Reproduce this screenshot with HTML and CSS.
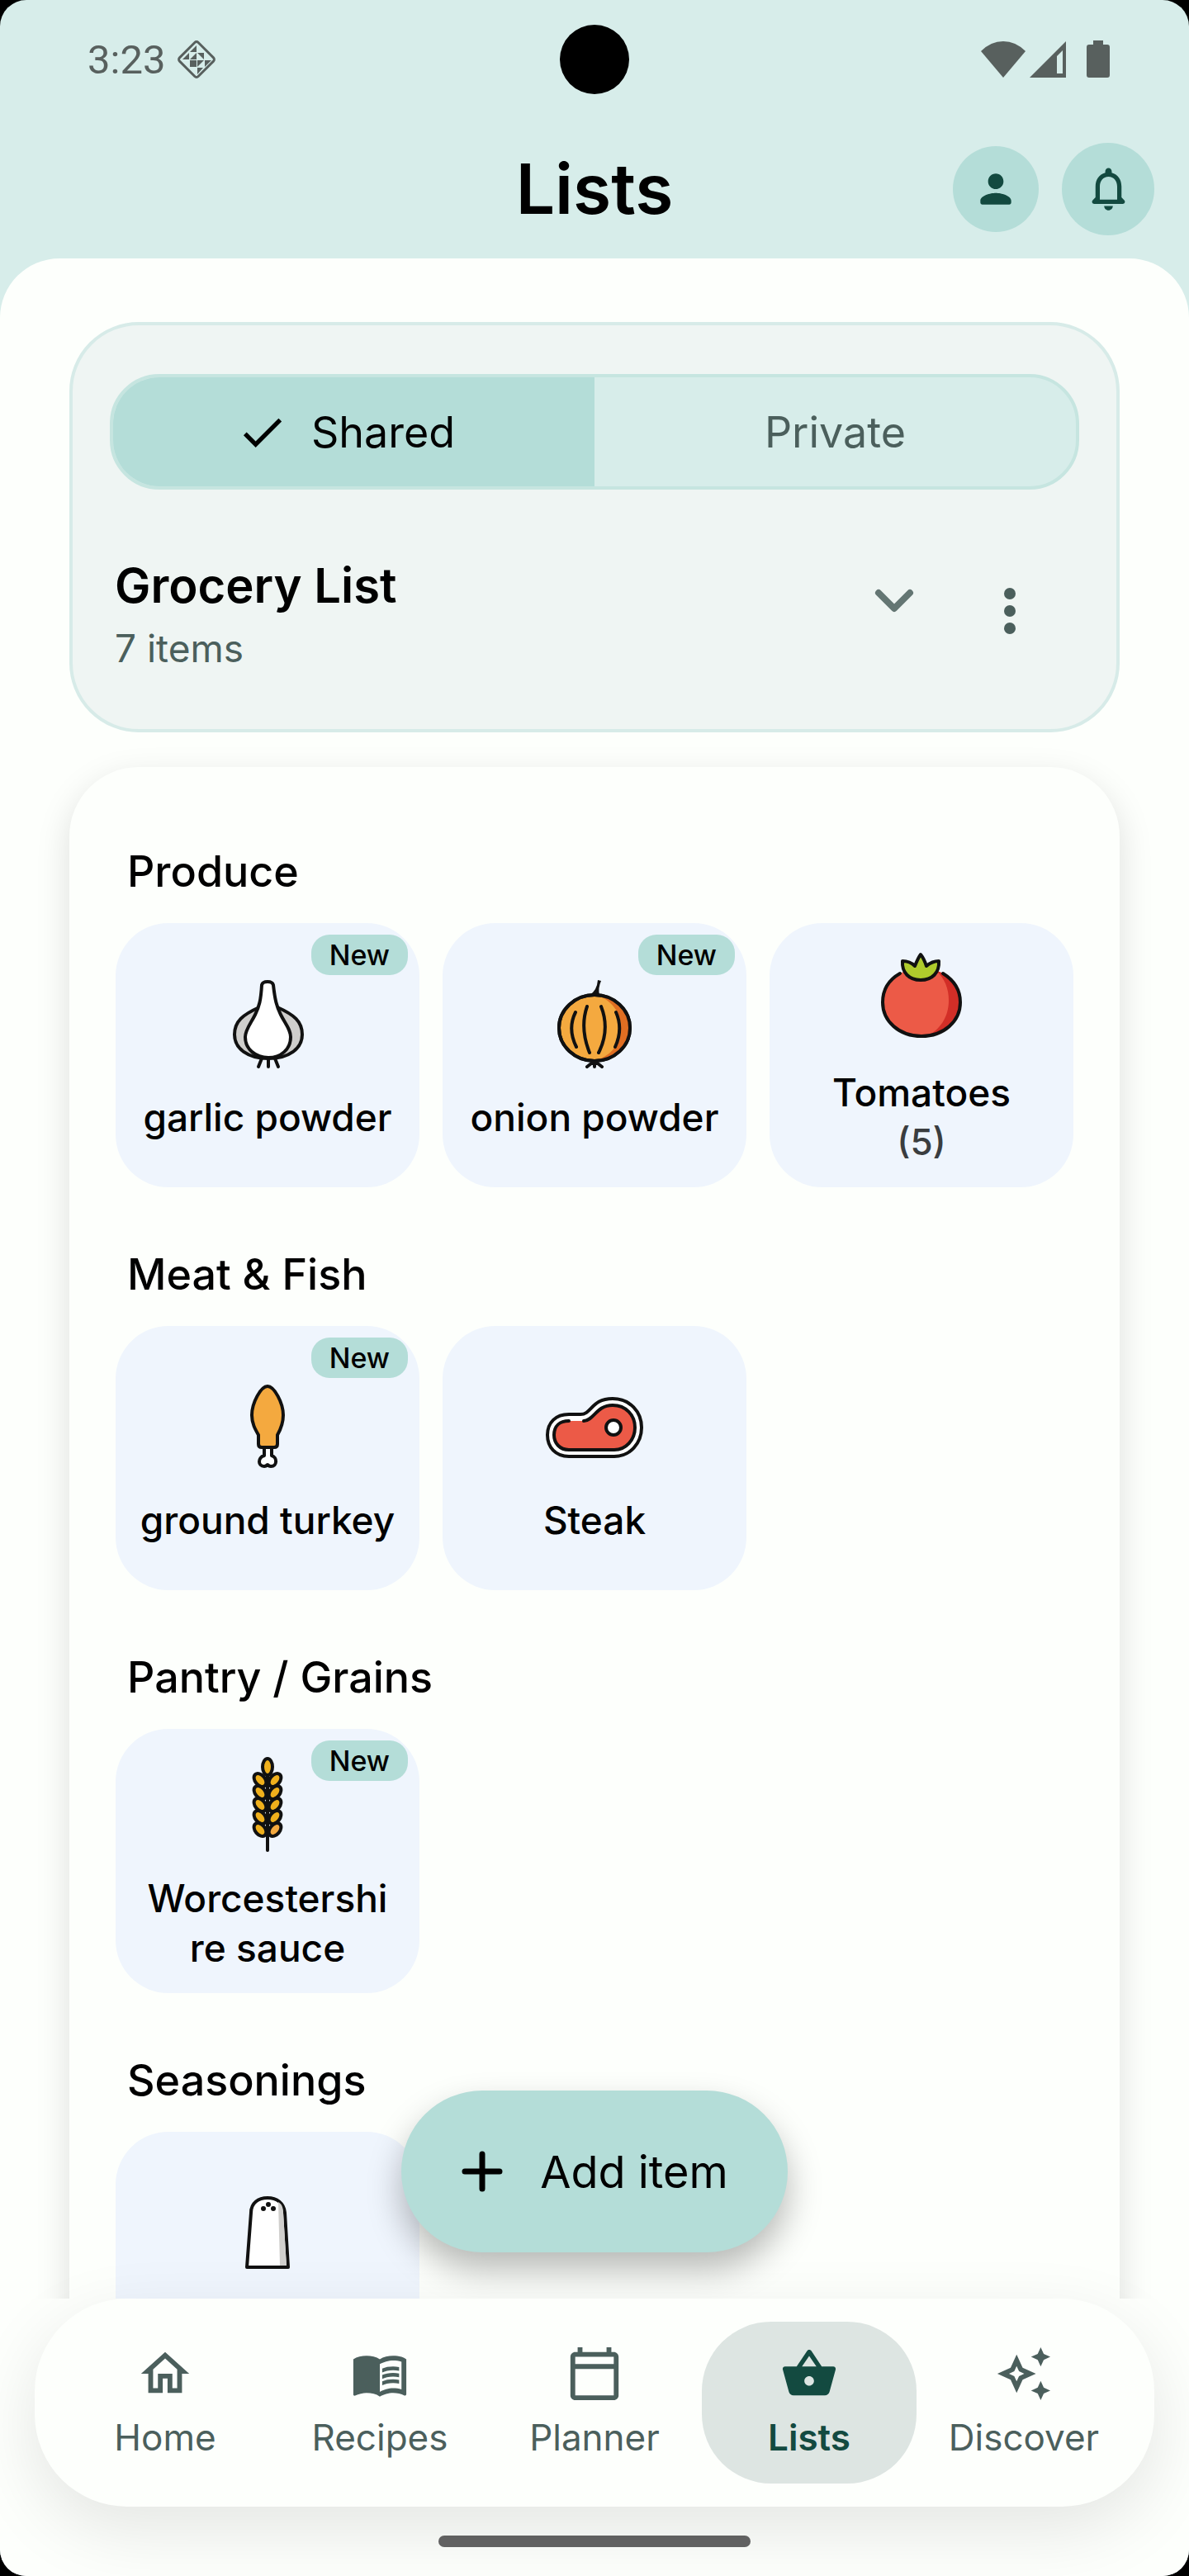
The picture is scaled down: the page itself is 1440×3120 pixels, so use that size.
FILE: index.html
```html
<!DOCTYPE html>
<html lang="en">
<head>
  <meta charset="UTF-8">
  <title>Lists</title>
  <meta name="viewport" content="width=device-width, initial-scale=1.0">
  <link rel="stylesheet" href="styles.css">
</head>
<body>
<div class="app">
  <div class="status-bar">
    <div class="status-left">
      <span class="clock">3:23</span>
      <svg class="status-diamond" viewBox="0 0 52 52">
        <rect x="10" y="10" width="32" height="32" rx="3" transform="rotate(45 26 26)" fill="none" stroke="currentColor" stroke-width="3"/>
        <path fill="currentColor" d="M26 9v8h-8zM17 18v8H9zM26 18v8h-8zM27 18h8v8zM26 27v8l-8-8zM18 27v8h8zM27 27h8l-8 8zM36 27h8l-8 8zM27 36h7l-7 8z"/>
      </svg>
    </div>
    <span class="camera"></span>
    <div class="status-right">
      <svg width="54" height="46" viewBox="0 0 54 46"><path fill="currentColor" d="M27 45L0 13Q12 1 27 1t27 12z"/></svg>
      <svg width="46" height="46" viewBox="0 0 46 46"><path fill="currentColor" fill-rule="evenodd" d="M45 1v44H1zM41 12l-7 7v21h7z"/></svg>
      <svg class="battery" width="28" height="46" viewBox="0 0 28 46"><path fill="currentColor" d="M8 0h12v5h5q3 0 3 3v34q0 3-3 3H3q-3 0-3-3V8q0-3 3-3h5z"/></svg>
    </div>
  </div>

  <header class="top-bar">
    <h1>Lists</h1>
    <div class="top-actions">
      <button class="round-btn" aria-label="Profile">
        <svg width="56" height="56" viewBox="0 0 24 24"><path fill="currentColor" d="M12 12c2.21 0 4-1.79 4-4s-1.79-4-4-4-4 1.79-4 4 1.79 4 4 4zm0 2c-2.67 0-8 1.34-8 4v1c0 .55.45 1 1 1h14c.55 0 1-.45 1-1v-1c0-2.66-5.33-4-8-4z"/></svg>
      </button>
      <button class="round-btn large" aria-label="Notifications">
        <svg width="63" height="63" viewBox="0 0 24 24"><path fill="currentColor" d="M19.29 17.29L18 16v-5c0-3.07-1.63-5.64-4.5-6.32V4c0-.83-.67-1.5-1.5-1.5s-1.5.67-1.5 1.5v.68C7.64 5.36 6 7.92 6 11v5l-1.29 1.29c-.63.63-.19 1.71.7 1.71h13.17c.9 0 1.34-1.08.71-1.71zM16 17H8v-6c0-2.48 1.51-4.5 4-4.5s4 2.02 4 4.5v6zm-4 5c1.1 0 2-.9 2-2h-4c0 1.1.89 2 2 2z"/></svg>
      </button>
    </div>
  </header>

  <div class="sheet">
    <main>
      <section class="list-picker">
        <div class="segmented">
          <button class="segment active" aria-pressed="true">
            <svg width="63" height="63" viewBox="0 0 24 24"><path fill="currentColor" d="M9 16.17L4.83 12l-1.42 1.41L9 19 21 7l-1.41-1.41z"/></svg>
            Shared
          </button>
          <button class="segment" aria-pressed="false">Private</button>
        </div>
        <div class="list-row">
          <div class="list-info">
            <h2>Grocery List</h2>
            <p>7 items</p>
          </div>
          <button class="icon-btn chevron" aria-label="Choose list">
            <svg width="84" height="84" viewBox="0 0 84 84"><path d="M23 20l19 19 19-19" fill="none" stroke="currentColor" stroke-width="8" stroke-linecap="round" stroke-linejoin="round"/></svg>
          </button>
          <button class="icon-btn" aria-label="More options">
            <svg width="84" height="84" viewBox="0 0 84 84"><g fill="currentColor"><circle cx="42" cy="21" r="7"/><circle cx="42" cy="42" r="7"/><circle cx="42" cy="63" r="7"/></g></svg>
          </button>
        </div>
      </section>

      <div class="items">
        <section>
          <h3>Produce</h3>
          <div class="tiles">
            <button class="tile">
              <span class="badge">New</span>
              <svg class="food" viewBox="0 0 120 120">
                <path fill="#cfcecc" d="M50 41C30 50 20 58 20 74c0 17 16 29 41 29s41-12 41-29c0-16-10-24-30-33"/>
                <path fill="#fff" d="M53 14q1-4 7-4t7 4c2 18 4 26 9 36 6 12 12 18 12 27 0 15-12 25-27 25S33 92 33 77c0-9 7-17 12-27 5-10 7-18 8-36z"/>
                <path fill="none" d="M53 103l-4 10M61 103v10M69 103l4 10"/>
              </svg>
              <span class="tile-name">garlic powder</span>
            </button>
            <button class="tile">
              <span class="badge">New</span>
              <svg class="food" viewBox="0 0 120 120">
                <path class="flat" fill="#111" d="M54 26q9-5 10-18l4 1q-4 9-2 17z"/>
                <ellipse cx="60" cy="66" rx="43" ry="40" fill="#f4a93f"/>
                <path class="flat" fill="#e06e22" d="M64 27c16 5 28 20 28 38 0 20-11 34-30 40 25 0 40-18 40-39 0-20-14-37-38-39z"/>
                <ellipse cx="60" cy="66" rx="43" ry="40" fill="none"/>
                <path fill="none" d="M37 47q-10 20 1 42M51 40q-9 26 3 56M68 40q11 28-3 56M86 47q9 20-1 42M60 106l-9 7M60 106v7M60 106l9 7"/>
              </svg>
              <span class="tile-name">onion powder</span>
            </button>
            <button class="tile">
              <svg class="food" viewBox="0 0 120 120">
                <ellipse class="flat" cx="60" cy="65" rx="47" ry="42" fill="#ec5a47"/>
                <path class="flat" fill="#d22e27" d="M78 27c10 9 15 21 15 36 0 20-11 36-27 43 24 0 41-20 41-42 0-17-10-32-29-37z"/>
                <path fill="none" d="M34 30C20 38 13 50 13 65c0 23 20 41 47 41s47-18 47-41c0-15-8-27-21-35"/>
                <path fill="#afcb2c" d="M37 15q9 0 15 6 4-10 7-14 4 5 7 14 7-6 15-6c1 14-8 23-22 23S36 29 37 15z"/>
              </svg>
              <span class="tile-name">Tomatoes</span>
              <span class="tile-qty">(5)</span>
            </button>
          </div>
        </section>

        <section>
          <h3>Meat &amp; Fish</h3>
          <div class="tiles">
            <button class="tile">
              <span class="badge">New</span>
              <svg class="food" viewBox="0 0 120 120">
                <path fill="#fff" d="M56 86v10c-8 2-8 13 0 13 2 0 3-1 4-2 1 1 2 2 4 2 8 0 8-11 1-13V86z"/>
                <path fill="#f4a93f" d="M60 12c8 0 19 20 19 35 0 10-3 17-7 24v11q0 4-4 4H53q-4 0-4-4V71c-4-7-8-14-8-24 0-15 11-35 19-35z"/>
              </svg>
              <span class="tile-name">ground turkey</span>
            </button>
            <button class="tile">
              <svg class="food" viewBox="0 0 120 120">
                <path fill="#fff" d="M29 97C13 97 3 86 3 71s10-25 26-25h14c14 0 13-19 39-19 21 0 35 16 35 35S103 97 84 97z"/>
                <path class="flat" fill="#ec5a47" d="M29 89c-11 0-18-8-18-18 0-11 7-17 18-17h18c13 0 15-19 35-19 16 0 27 12 27 27S98 89 84 89z"/>
                <path fill="none" d="M29 54c-11 0-18 6-18 17 0 10 7 18 18 18h55c14 0 25-12 25-27S98 35 82 35c-20 0-22 18-35 19"/>
                <circle cx="83" cy="62" r="9" fill="#fff"/>
              </svg>
              <span class="tile-name">Steak</span>
            </button>
          </div>
        </section>

        <section>
          <h3>Pantry / Grains</h3>
          <div class="tiles">
            <button class="tile">
              <span class="badge">New</span>
              <svg class="food" viewBox="0 0 120 120">
                <path d="M60 26v90"/>
                <g fill="#f0b01c">
                  <ellipse cx="60" cy="15" rx="6" ry="10"/>
                  <ellipse cx="51" cy="31" rx="6" ry="9" transform="rotate(-40 51 31)"/>
                  <ellipse cx="69" cy="31" rx="6" ry="9" transform="rotate(40 69 31)"/>
                  <ellipse cx="51" cy="46" rx="6" ry="9" transform="rotate(-40 51 46)"/>
                  <ellipse cx="69" cy="46" rx="6" ry="9" transform="rotate(40 69 46)"/>
                  <ellipse cx="51" cy="61" rx="6" ry="9" transform="rotate(-40 51 61)"/>
                  <ellipse cx="69" cy="61" rx="6" ry="9" transform="rotate(40 69 61)"/>
                  <ellipse cx="51" cy="76" rx="6" ry="9" transform="rotate(-40 51 76)"/>
                  <ellipse cx="69" cy="76" rx="6" ry="9" transform="rotate(40 69 76)"/>
                  <ellipse cx="51" cy="91" rx="6" ry="9" transform="rotate(-40 51 91)"/>
                  <ellipse cx="69" cy="91" rx="6" ry="9" transform="rotate(40 69 91)" fill="#f4a93f"/>
                </g>
              </svg>
              <span class="tile-name">Worcestershi<wbr>re sauce</span>
            </button>
          </div>
        </section>

        <section>
          <h3>Seasonings</h3>
          <div class="tiles">
            <button class="tile">
              <svg class="food" viewBox="0 0 120 120">
                <path fill="#fff" d="M40 37c0-12 9-18 20-18s20 6 21 18l4 66H35z"/>
                <path class="flat" fill="#d0cfcd" d="M73 24c5 3 6 8 6 13l4 64h-8z"/>
                <g class="flat" fill="#111"><circle cx="55" cy="32" r="3"/><circle cx="61" cy="27" r="3"/><circle cx="67" cy="32" r="3"/></g>
              </svg>
              <span class="tile-name"></span>
            </button>
          </div>
        </section>
      </div>

      <button class="add-btn">
        <svg width="84" height="84" viewBox="0 0 84 84"><path d="M42 21v42M21 42h42" stroke="currentColor" stroke-width="7" stroke-linecap="round"/></svg>
        Add item
      </button>
    </main>

    <nav class="bottom-nav">
      <a href="#home" class="nav-item">
        <svg viewBox="0 0 24 24"><path d="M12 5.69l5 4.5V18h-2v-6H9v6H7v-7.81l5-4.5M12 3L2 12h3v8h6v-6h2v6h6v-8h3L12 3z"/></svg>
        Home
      </a>
      <a href="#recipes" class="nav-item">
        <svg viewBox="0 0 24 24"><path d="M21 5c-1.11-.35-2.33-.5-3.5-.5-1.95 0-4.05.4-5.5 1.5-1.45-1.1-3.55-1.5-5.5-1.5S2.45 4.9 1 6v14.65c0 .25.25.5.5.5.1 0 .15-.05.25-.05C3.1 20.45 5.05 20 6.5 20c1.95 0 4.05.4 5.5 1.5 1.35-.85 3.8-1.5 5.5-1.5 1.65 0 3.35.3 4.75 1.05.1.05.15.05.25.05.25 0 .5-.25.5-.5V6c-.6-.45-1.25-.75-2-1zm0 13.5c-1.1-.35-2.3-.5-3.5-.5-1.7 0-4.15.65-5.5 1.5V8c1.35-.85 3.8-1.5 5.5-1.5 1.2 0 2.4.15 3.5.5v11.5z"/><path d="M17.5 10.5c.88 0 1.73.09 2.5.26V9.24c-.79-.15-1.64-.24-2.5-.24-1.7 0-3.24.29-4.5.83v1.66c1.13-.64 2.7-.99 4.5-.99zM13 12.49v1.66c1.13-.64 2.7-.99 4.5-.99.88 0 1.73.09 2.5.26V11.9c-.79-.15-1.64-.24-2.5-.24-1.7 0-3.24.3-4.5.83zM17.5 14.33c-1.7 0-3.24.29-4.5.83v1.66c1.13-.64 2.7-.99 4.5-.99.88 0 1.73.09 2.5.26v-1.52c-.79-.16-1.64-.24-2.5-.24z"/></svg>
        Recipes
      </a>
      <a href="#planner" class="nav-item">
        <svg viewBox="0 0 24 24"><path d="M20 3h-1V1h-2v2H7V1H5v2H4c-1.1 0-2 .9-2 2v16c0 1.1.9 2 2 2h16c1.1 0 2-.9 2-2V5c0-1.1-.9-2-2-2zm0 18H4V10h16v11zm0-13H4V5h16v3z"/></svg>
        Planner
      </a>
      <a href="#lists" class="nav-item active" aria-current="page">
        <svg viewBox="0 0 24 24"><path d="M17.21 9l-4.38-6.56c-.19-.28-.51-.42-.83-.42-.32 0-.64.14-.83.43L6.79 9H2c-.55 0-1 .45-1 1 0 .09.01.18.04.27l2.54 9.27c.23.84 1 1.46 1.92 1.46h13c.92 0 1.69-.62 1.93-1.46l2.54-9.27L23 10c0-.55-.45-1-1-1h-4.79zM9 9l3-4.4L15 9H9zm3 8c-1.1 0-2-.9-2-2s.9-2 2-2 2 .9 2 2-.9 2-2 2z"/></svg>
        Lists
      </a>
      <a href="#discover" class="nav-item">
        <svg viewBox="0 0 24 24"><path d="M19 9l1.25-2.75L23 5l-2.75-1.25L19 1l-1.25 2.75L15 5l2.75 1.25L19 9zM19 15l-1.25 2.75L15 19l2.75 1.25L19 23l1.25-2.75L23 19l-2.75-1.25L19 15zM11.5 9.5L9 4 6.5 9.5 1 12l5.5 2.5L9 20l2.5-5.5L17 12l-5.5-2.5zm-1.51 3.49L9 15.17l-.99-2.18L5.83 12l2.18-.99L9 8.83l.99 2.18 2.18.99-2.18.99z"/></svg>
        Discover
      </a>
    </nav>
    <div class="gesture-bar"></div>
  </div>
</div>
</body>
</html>
```

FILE: styles.css
```css
:root {
  --primary: #b4ddd8;
  --primary-light: #d7edea;
  --primary-dark: #134a40;
  --surface: #fdfffc;
  --panel: #eff5f3;
  --tile: #eff5fd;
  --text-main: #000;
  --text-soft: #4b5f5c;
}
* {
  box-sizing: border-box;
}
body {
  margin: 0;
  background: #000;
  color: var(--text-main);
  font-family: Inter, "Open Sans", sans-serif;
}
h1, h2, h3, p {
  margin: 0;
}
button {
  border: none;
  padding: 0;
  background: none;
  color: inherit;
  font: inherit;
  cursor: pointer;
}
svg {
  display: block;
  flex-shrink: 0;
}
.app {
  display: flex;
  flex-direction: column;
  height: 100vh;
  background: var(--primary-light);
  border-radius: 32px;
  overflow: hidden;
}

/* status bar */
.status-bar {
  display: grid;
  grid-template-columns: 1fr auto 1fr;
  align-items: center;
  height: 144px;
  padding: 0 96px;
  color: #58605e;
}
.status-left, .status-right {
  display: flex;
  align-items: center;
}
.status-left {
  gap: 12px;
  padding-left: 10px;
}
.status-right {
  justify-content: flex-end;
  gap: 4px;
}
.clock {
  font-family: Roboto, sans-serif;
  font-size: 49px;
}
.status-diamond {
  width: 52px;
  height: 52px;
}
.camera {
  width: 84px;
  height: 84px;
  border-radius: 50%;
  background: #000;
}
.battery {
  margin-left: 20px;
}

/* title row */
.top-bar {
  display: grid;
  grid-template-columns: 1fr auto 1fr;
  align-items: center;
  height: 169px;
  padding: 0 42px;
}
.top-bar h1 {
  grid-column: 2;
  font-size: 84px;
  line-height: 112px;
  font-weight: 600;
}
.top-actions {
  display: flex;
  align-items: center;
  justify-content: flex-end;
  gap: 28px;
}
.round-btn {
  display: flex;
  align-items: center;
  justify-content: center;
  width: 104px;
  height: 104px;
  border-radius: 50%;
  background: var(--primary);
  color: var(--primary-dark);
}
.round-btn.large {
  width: 112px;
  height: 112px;
}

.sheet {
  flex: 1;
  min-height: 0;
  display: flex;
  flex-direction: column;
  background: var(--surface);
  border-radius: 72px 72px 0 0;
}
main {
  position: relative;
  flex: 1;
  min-height: 0;
  padding: 77px 84px 0;
  overflow: hidden;
}

/* shared / private + current list */
.list-picker {
  padding: 59px 45px 70px;
  background: var(--panel);
  border: 4px solid #d7ebe8;
  border-radius: 84px;
}
.segmented {
  display: grid;
  grid-template-columns: 1fr 1fr;
  height: 140px;
  border: 4px solid #c6e5e0;
  border-radius: 60px;
  background: var(--primary-light);
  overflow: hidden;
}
.segment {
  display: flex;
  align-items: center;
  justify-content: center;
  gap: 28px;
  font-size: 52px;
  color: var(--text-soft);
}
.segment.active {
  padding-right: 20px;
  background: var(--primary);
  color: var(--text-main);
}
.list-row {
  display: flex;
  align-items: center;
  gap: 28px;
  margin-top: 74px;
  padding: 0 28px 0 6px;
}
.list-info {
  flex: 1;
}
.list-info h2 {
  font-size: 58px;
  line-height: 84px;
  font-weight: 600;
}
.list-info p {
  margin-top: 6px;
  font-size: 46px;
  line-height: 56px;
  color: var(--text-soft);
}
.icon-btn {
  display: flex;
  align-items: center;
  justify-content: center;
  width: 112px;
  height: 112px;
  color: var(--text-soft);
}
.icon-btn.chevron {
  color: #647673;
}

/* grouped items */
.items {
  margin-top: 42px;
  padding: 21px 56px 56px;
  background: var(--surface);
  border-radius: 84px;
  box-shadow: 0 14px 42px rgba(0, 0, 0, 0.13);
}
.items h3 {
  padding: 70px 14px 26px;
  font-size: 52px;
  line-height: 72px;
  font-weight: 500;
}
.tiles {
  display: grid;
  grid-template-columns: repeat(3, 1fr);
  gap: 28px;
}
.tile {
  position: relative;
  display: flex;
  flex-direction: column;
  align-items: center;
  justify-content: center;
  min-height: 320px;
  padding: 6px 24px 0;
  border-radius: 64px;
  background: var(--tile);
  font-size: 46px;
  line-height: 60px;
  font-weight: 500;
}
.tile-name {
  min-height: 60px;
}
.tile-qty {
  color: #3a3d3f;
  font-size: 44px;
}
.food {
  width: 120px;
  height: 120px;
  margin-bottom: 24px;
  stroke: #111;
  stroke-width: 4;
  stroke-linecap: round;
  stroke-linejoin: round;
}
.food .flat {
  stroke: none;
}
.badge {
  position: absolute;
  top: 14px;
  right: 14px;
  padding: 0 22px;
  border-radius: 22px;
  background: var(--primary);
  font-size: 34px;
  line-height: 49px;
}

.add-btn {
  position: absolute;
  left: 0;
  right: 0;
  bottom: 56px;
  display: flex;
  align-items: center;
  gap: 28px;
  width: fit-content;
  height: 196px;
  margin: 0 auto;
  padding: 0 72px 0 56px;
  border-radius: 98px;
  background: var(--primary);
  box-shadow: 0 21px 42px rgba(0, 0, 0, 0.28);
  font-size: 54px;
}

/* bottom navigation */
.bottom-nav {
  position: relative;
  display: flex;
  margin: 0 42px;
  padding: 28px;
  background: var(--surface);
  border-radius: 112px;
  box-shadow: 0 28px 84px rgba(0, 0, 0, 0.1);
}
.nav-item {
  flex: 1 1 0;
  display: flex;
  flex-direction: column;
  align-items: center;
  gap: 14px;
  padding: 28px 0;
  border-radius: 84px;
  color: var(--text-soft);
  font-size: 44px;
  line-height: 56px;
  text-decoration: none;
}
.nav-item svg {
  width: 70px;
  height: 70px;
  fill: currentColor;
}
.nav-item.active {
  background: #dde5e2;
  color: var(--primary-dark);
  font-weight: 600;
}
.gesture-bar {
  position: relative;
  width: 378px;
  height: 14px;
  margin: 35px auto;
  border-radius: 7px;
  background: #616161;
}
```
